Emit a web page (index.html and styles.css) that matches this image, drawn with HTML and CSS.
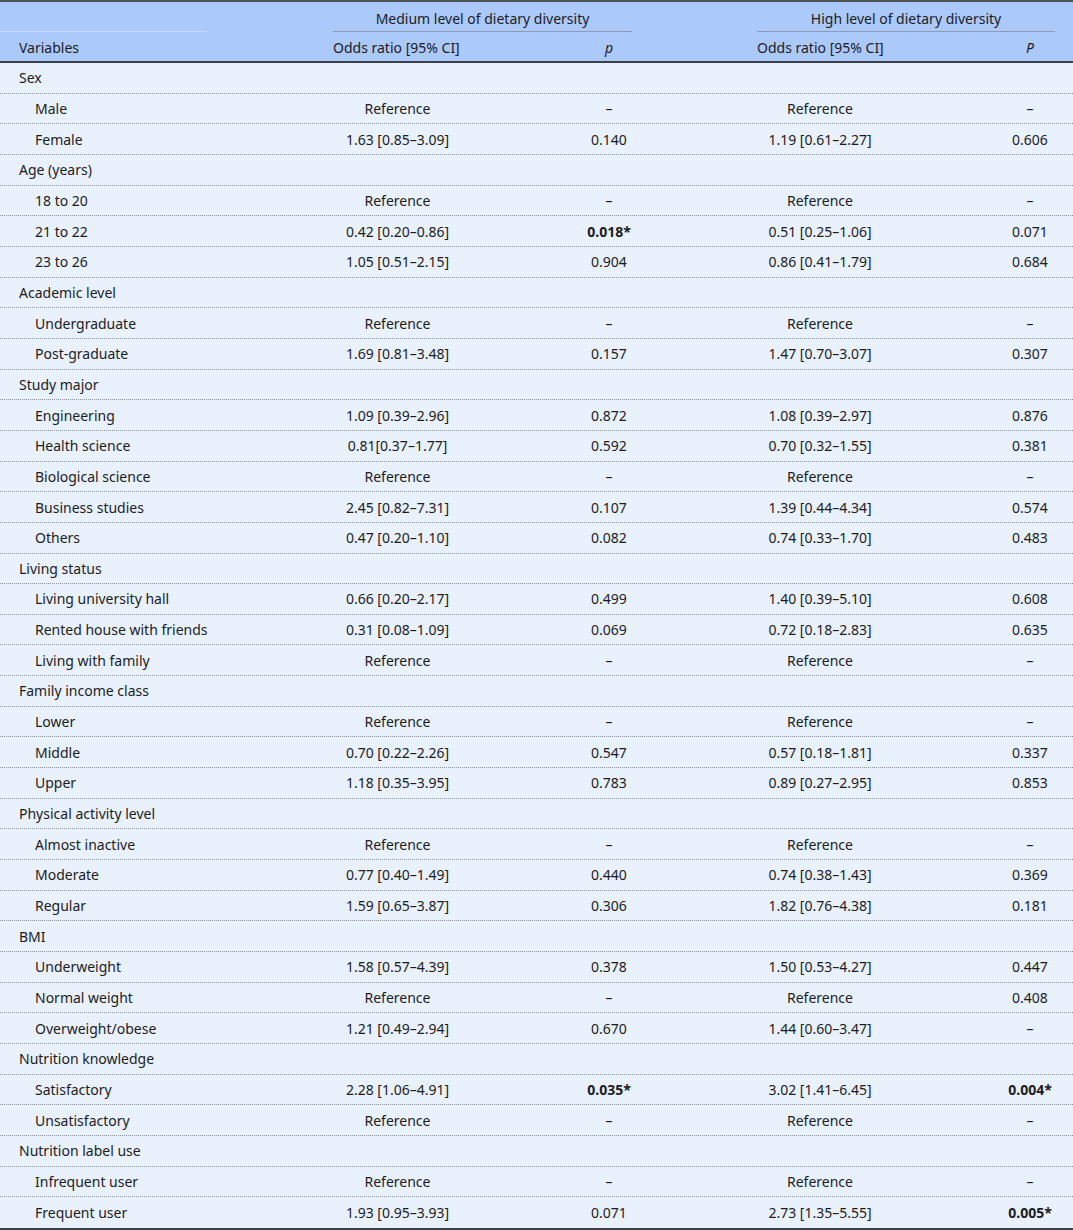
FILE: index.html
```html
<!DOCTYPE html>
<html lang="en">
<head>
<meta charset="utf-8">
<title>Dietary diversity odds ratios</title>
<link rel="stylesheet" href="styles.css">
</head>
<body>
<div class="tbl">
  <div class="head">
    <div class="grid hrow1">
      <div class="cell-var"><div class="var-line"></div></div>
      <div class="grp-m">Medium level of dietary diversity</div>
      <div class="grp-h">High level of dietary diversity</div>
    </div>
    <div class="grid hrow2">
      <div class="lbl">Variables</div>
      <div class="or-m hl">Odds ratio [95% CI]</div>
      <div class="p-m"><i>p</i></div>
      <div class="or-h hl">Odds ratio [95% CI]</div>
      <div class="p-h"><i>P</i></div>
    </div>
  </div>
  <div class="body">
    <div class="grid row"><div class="lbl">Sex</div></div>
    <div class="grid row"><div class="lbl sub">Male</div><div class="or-m">Reference</div><div class="p-m">–</div><div class="or-h">Reference</div><div class="p-h">–</div></div>
    <div class="grid row"><div class="lbl sub">Female</div><div class="or-m">1.63 [0.85–3.09]</div><div class="p-m">0.140</div><div class="or-h">1.19 [0.61–2.27]</div><div class="p-h">0.606</div></div>

    <div class="grid row"><div class="lbl">Age (years)</div></div>
    <div class="grid row"><div class="lbl sub">18 to 20</div><div class="or-m">Reference</div><div class="p-m">–</div><div class="or-h">Reference</div><div class="p-h">–</div></div>
    <div class="grid row"><div class="lbl sub">21 to 22</div><div class="or-m">0.42 [0.20–0.86]</div><div class="p-m sig">0.018*</div><div class="or-h">0.51 [0.25–1.06]</div><div class="p-h">0.071</div></div>
    <div class="grid row"><div class="lbl sub">23 to 26</div><div class="or-m">1.05 [0.51–2.15]</div><div class="p-m">0.904</div><div class="or-h">0.86 [0.41–1.79]</div><div class="p-h">0.684</div></div>

    <div class="grid row"><div class="lbl">Academic level</div></div>
    <div class="grid row"><div class="lbl sub">Undergraduate</div><div class="or-m">Reference</div><div class="p-m">–</div><div class="or-h">Reference</div><div class="p-h">–</div></div>
    <div class="grid row"><div class="lbl sub">Post-graduate</div><div class="or-m">1.69 [0.81–3.48]</div><div class="p-m">0.157</div><div class="or-h">1.47 [0.70–3.07]</div><div class="p-h">0.307</div></div>

    <div class="grid row"><div class="lbl">Study major</div></div>
    <div class="grid row"><div class="lbl sub">Engineering</div><div class="or-m">1.09 [0.39–2.96]</div><div class="p-m">0.872</div><div class="or-h">1.08 [0.39–2.97]</div><div class="p-h">0.876</div></div>
    <div class="grid row"><div class="lbl sub">Health science</div><div class="or-m">0.81[0.37–1.77]</div><div class="p-m">0.592</div><div class="or-h">0.70 [0.32–1.55]</div><div class="p-h">0.381</div></div>
    <div class="grid row"><div class="lbl sub">Biological science</div><div class="or-m">Reference</div><div class="p-m">–</div><div class="or-h">Reference</div><div class="p-h">–</div></div>
    <div class="grid row"><div class="lbl sub">Business studies</div><div class="or-m">2.45 [0.82–7.31]</div><div class="p-m">0.107</div><div class="or-h">1.39 [0.44–4.34]</div><div class="p-h">0.574</div></div>
    <div class="grid row"><div class="lbl sub">Others</div><div class="or-m">0.47 [0.20–1.10]</div><div class="p-m">0.082</div><div class="or-h">0.74 [0.33–1.70]</div><div class="p-h">0.483</div></div>

    <div class="grid row"><div class="lbl">Living status</div></div>
    <div class="grid row"><div class="lbl sub">Living university hall</div><div class="or-m">0.66 [0.20–2.17]</div><div class="p-m">0.499</div><div class="or-h">1.40 [0.39–5.10]</div><div class="p-h">0.608</div></div>
    <div class="grid row"><div class="lbl sub">Rented house with friends</div><div class="or-m">0.31 [0.08–1.09]</div><div class="p-m">0.069</div><div class="or-h">0.72 [0.18–2.83]</div><div class="p-h">0.635</div></div>
    <div class="grid row"><div class="lbl sub">Living with family</div><div class="or-m">Reference</div><div class="p-m">–</div><div class="or-h">Reference</div><div class="p-h">–</div></div>

    <div class="grid row"><div class="lbl">Family income class</div></div>
    <div class="grid row"><div class="lbl sub">Lower</div><div class="or-m">Reference</div><div class="p-m">–</div><div class="or-h">Reference</div><div class="p-h">–</div></div>
    <div class="grid row"><div class="lbl sub">Middle</div><div class="or-m">0.70 [0.22–2.26]</div><div class="p-m">0.547</div><div class="or-h">0.57 [0.18–1.81]</div><div class="p-h">0.337</div></div>
    <div class="grid row"><div class="lbl sub">Upper</div><div class="or-m">1.18 [0.35–3.95]</div><div class="p-m">0.783</div><div class="or-h">0.89 [0.27–2.95]</div><div class="p-h">0.853</div></div>

    <div class="grid row"><div class="lbl">Physical activity level</div></div>
    <div class="grid row"><div class="lbl sub">Almost inactive</div><div class="or-m">Reference</div><div class="p-m">–</div><div class="or-h">Reference</div><div class="p-h">–</div></div>
    <div class="grid row"><div class="lbl sub">Moderate</div><div class="or-m">0.77 [0.40–1.49]</div><div class="p-m">0.440</div><div class="or-h">0.74 [0.38–1.43]</div><div class="p-h">0.369</div></div>
    <div class="grid row"><div class="lbl sub">Regular</div><div class="or-m">1.59 [0.65–3.87]</div><div class="p-m">0.306</div><div class="or-h">1.82 [0.76–4.38]</div><div class="p-h">0.181</div></div>

    <div class="grid row"><div class="lbl">BMI</div></div>
    <div class="grid row"><div class="lbl sub">Underweight</div><div class="or-m">1.58 [0.57–4.39]</div><div class="p-m">0.378</div><div class="or-h">1.50 [0.53–4.27]</div><div class="p-h">0.447</div></div>
    <div class="grid row"><div class="lbl sub">Normal weight</div><div class="or-m">Reference</div><div class="p-m">–</div><div class="or-h">Reference</div><div class="p-h">0.408</div></div>
    <div class="grid row"><div class="lbl sub">Overweight/obese</div><div class="or-m">1.21 [0.49–2.94]</div><div class="p-m">0.670</div><div class="or-h">1.44 [0.60–3.47]</div><div class="p-h">–</div></div>

    <div class="grid row"><div class="lbl">Nutrition knowledge</div></div>
    <div class="grid row"><div class="lbl sub">Satisfactory</div><div class="or-m">2.28 [1.06–4.91]</div><div class="p-m sig">0.035*</div><div class="or-h">3.02 [1.41–6.45]</div><div class="p-h sig">0.004*</div></div>
    <div class="grid row"><div class="lbl sub">Unsatisfactory</div><div class="or-m">Reference</div><div class="p-m">–</div><div class="or-h">Reference</div><div class="p-h">–</div></div>

    <div class="grid row"><div class="lbl">Nutrition label use</div></div>
    <div class="grid row"><div class="lbl sub">Infrequent user</div><div class="or-m">Reference</div><div class="p-m">–</div><div class="or-h">Reference</div><div class="p-h">–</div></div>
    <div class="grid row last"><div class="lbl sub">Frequent user</div><div class="or-m">1.93 [0.95–3.93]</div><div class="p-m">0.071</div><div class="or-h">2.73 [1.35–5.55]</div><div class="p-h sig">0.005*</div></div>
  </div>
</div>
</body>
</html>
```

FILE: styles.css
```css
html, body {
  margin: 0;
  padding: 0;
  background: #e9f1fd;
}

.tbl {
  width: 1073px;
  font-family: "Noto Sans", "Open Sans", sans-serif;
  font-size: 14px;
  color: #1c1c1c;
}

.grid {
  display: grid;
  grid-template-columns: 333px 129px 124px 46px 125px 126px 122px 50px 18px;
  align-items: center;
  white-space: nowrap;
}

.head {
  background: #abc9fb;
  border-top: 2px solid #505358;
  border-bottom: 2px solid #3c3f44;
}

.hrow1 {
  height: 30px;
  align-items: stretch;
}

.cell-var {
  grid-column: 1;
  display: flex;
}

.var-line {
  width: 207px;
  border-bottom: 1px solid #c8daf8;
}

.grp-m,
.grp-h {
  display: flex;
  align-items: center;
  justify-content: center;
  border-bottom: 1px solid #8e9bb3;
  padding-top: 3px;
}

.grp-m { grid-column: 2 / 5; }
.grp-h { grid-column: 6 / 9; }

.hrow2 {
  height: 29px;
  padding-top: 1px;
  box-sizing: border-box;
}

.lbl {
  grid-column: 1;
  padding-left: 19px;
}

.lbl.sub {
  padding-left: 35px;
}

.or-m, .p-m, .or-h, .p-h {
  justify-self: center;
}

.or-m { grid-column: 2; }
.p-m { grid-column: 4; }
.or-h { grid-column: 6; }
.p-h { grid-column: 8; }

.hl {
  justify-self: start;
}

.row {
  box-sizing: border-box;
  height: 30.66px;
  border-bottom: 1px dotted #8b9099;
}

.row.last {
  border-bottom: none;
}

.body {
  border-bottom: 2px solid #3c3f44;
}

.sig {
  font-weight: bold;
}
```
